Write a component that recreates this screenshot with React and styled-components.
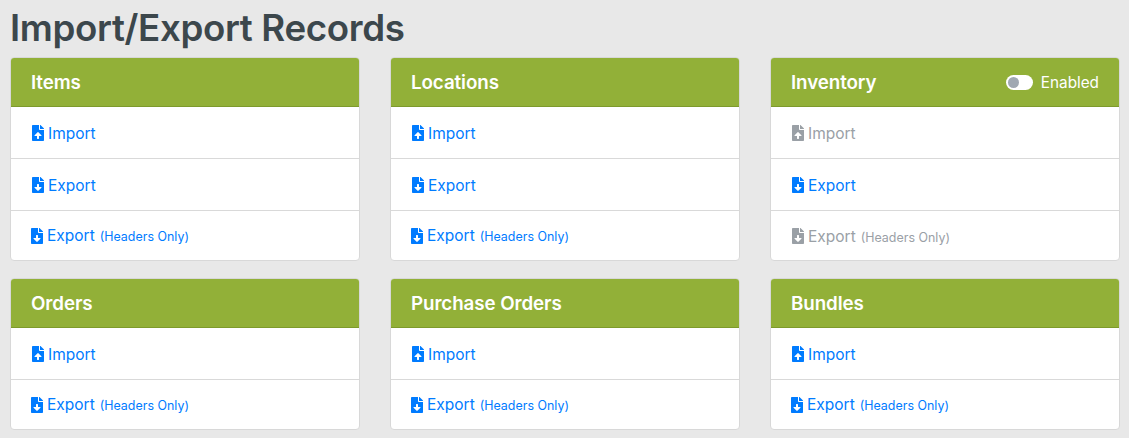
import styled, { createGlobalStyle } from 'styled-components';
import { FaFileUpload, FaFileDownload } from 'react-icons/fa';

const GlobalStyle = createGlobalStyle`
  html, body {
    margin: 0;
    background: #e8e8e8;
    font-family: Inter, "Liberation Sans", sans-serif;
  }
`;

const Page = styled.div`
  width: 1129px;
  height: 438px;
  overflow: hidden;
  box-sizing: border-box;
  padding: 7px 9px 0 10px;
`;

const Title = styled.h1`
  margin: 0 0 8px;
  font-size: 36.7px;
  line-height: 42px;
  font-weight: 600;
  letter-spacing: -0.35px;
  color: #3c474c;
`;

const CardGrid = styled.div`
  display: grid;
  grid-template-columns: repeat(3, 350px);
  column-gap: 30px;
  row-gap: 17px;
`;

const Card = styled.section`
  background: #fff;
  border: 1px solid #d8d8d8;
  border-radius: 4px;
  overflow: hidden;
`;

const CardHeader = styled.header`
  display: flex;
  align-items: center;
  justify-content: space-between;
  box-sizing: border-box;
  height: 49px;
  padding: 0 20px;
  background: #92b038;
  border-bottom: 1px solid #7d9a2c;
  color: #fff;
`;

const CardTitle = styled.h2`
  margin: 0;
  font-size: 18.8px;
  font-weight: 600;
  letter-spacing: -0.1px;
`;

const Toggle = styled.label`
  display: flex;
  align-items: center;
  gap: 8px;
  font-size: 15.3px;
`;

const Track = styled.span`
  display: block;
  box-sizing: border-box;
  width: 27px;
  height: 15px;
  padding: 2px;
  border-radius: 8px;
  background: #fff;
`;

const Knob = styled.span`
  display: block;
  width: 11px;
  height: 11px;
  border-radius: 50%;
  background: #a0a8b2;
`;

const Row = styled.div`
  display: flex;
  align-items: center;
  box-sizing: border-box;
  height: ${(p) => (p.$first ? '51px' : p.$last ? '50px' : '52px')};
  padding-top: ${(p) => (p.$last && !p.$disabled ? '0' : '1px')};
  padding-left: ${(p) => (p.$last && !p.$disabled ? '20px' : '21px')};
  border-top: ${(p) => (p.$first ? 'none' : '1px solid #d9d9d9')};
  color: ${(p) => (p.$disabled ? '#9aa0a6' : '#007bff')};
  font-size: 15.5px;
`;

const RowIcon = styled.span`
  display: inline-flex;
  width: 12px;
  height: 16px;
  margin-right: 4px;

  svg {
    width: 12px;
    height: 16px;
  }
`;

const Note = styled.small`
  margin-left: 5px;
  font-size: 12.45px;
  padding-top: 2px;
`;

const full = [
  { kind: 'import', label: 'Import' },
  { kind: 'export', label: 'Export' },
  { kind: 'export', label: 'Export', note: true },
];

const short = [
  { kind: 'import', label: 'Import' },
  { kind: 'export', label: 'Export', note: true },
];

const cards = [
  { title: 'Items', rows: full },
  { title: 'Locations', rows: full },
  {
    title: 'Inventory',
    toggle: true,
    rows: [
      { kind: 'import', label: 'Import', disabled: true },
      { kind: 'export', label: 'Export' },
      { kind: 'export', label: 'Export', note: true, disabled: true },
    ],
  },
  { title: 'Orders', rows: short },
  { title: 'Purchase Orders', rows: short },
  { title: 'Bundles', rows: short },
];

export default function App() {
  return (
    <Page>
      <GlobalStyle />
      <Title>Import/Export Records</Title>
      <CardGrid>
        {cards.map((card) => (
          <Card key={card.title}>
            <CardHeader>
              <CardTitle>{card.title}</CardTitle>
              {card.toggle && (
                <Toggle>
                  <Track>
                    <Knob />
                  </Track>
                  Enabled
                </Toggle>
              )}
            </CardHeader>
            {card.rows.map((row, i) => {
              const last = i === card.rows.length - 1;
              return (
                <Row key={i} $first={i === 0} $last={last} $disabled={row.disabled}>
                  <RowIcon>
                    {row.kind === 'import' ? <FaFileUpload /> : <FaFileDownload />}
                  </RowIcon>
                  {row.label}
                  {row.note && <Note>(Headers Only)</Note>}
                </Row>
              );
            })}
          </Card>
        ))}
      </CardGrid>
    </Page>
  );
}
